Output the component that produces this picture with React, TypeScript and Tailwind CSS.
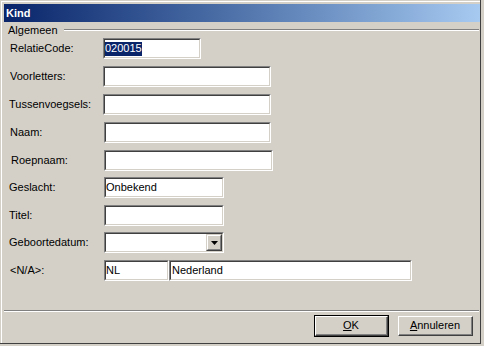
import React from "react";

const font = { fontFamily: '"Liberation Sans", Arial, sans-serif' };

function Edit({
  w,
  children,
  className = "",
}: {
  w: string;
  children?: React.ReactNode;
  className?: string;
}) {
  return (
    <div
      className={`${w} h-[21px] shrink-0 border border-t-[#808080] border-l-[#808080] border-r-white border-b-white ${className}`}
    >
      <div className="h-full w-full border border-t-[#404040] border-l-[#404040] border-r-[#d4d0c8] border-b-[#d4d0c8] bg-white flex items-center text-[11px] text-black leading-none overflow-hidden">
        {children}
      </div>
    </div>
  );
}

function Row({
  label,
  mt,
  labelClass = "pl-[6px]",
  children,
}: {
  label: string;
  mt: string;
  labelClass?: string;
  children: React.ReactNode;
}) {
  return (
    <div className={`flex items-center h-[21px] ${mt}`}>
      <div className={`w-[99px] shrink-0 text-[11px] text-black ${labelClass}`}>{label}</div>
      {children}
    </div>
  );
}

export default function App() {
  return (
    <div className="w-[484px] h-[346px] bg-[#d4d0c8] overflow-hidden" style={font}>
      <div className="w-[481px] h-[344px] border-r border-b border-[#404040] bg-[#d4d0c8] flex flex-col">
        <div className="mt-[1px] ml-[1px] flex-1 border-t border-l border-white pt-[2px] pl-[2px] flex flex-col">
          {/* Title bar */}
          <div className="h-[18px] w-[476px] bg-linear-to-r from-[#0a246a] to-[#a6caf0] flex items-center pl-[2px]">
            <span className="text-white font-bold text-[11px] leading-none">Kind</span>
          </div>

          {/* Main area */}
          <div className="flex-1 flex flex-col">
            {/* Group header */}
            <div className="h-[14px] mt-[1px] flex items-center">
              <span className="pl-[4px] text-[11px] text-black leading-none">Algemeen</span>
              <div className="flex-1 ml-[6px] mr-[1px] h-[2px] border-t border-b border-t-[#808080] border-b-white" />
            </div>

            <Row label="RelatieCode:" mt="mt-[1px]">
              <Edit w="w-[98px]">
                <span className="bg-[#0a246a] text-white h-[14px] flex items-center">020015</span>
              </Edit>
            </Row>
            <Row label="Voorletters:" mt="mt-[7px]">
              <Edit w="w-[168px]" />
            </Row>
            <Row label="Tussenvoegsels:" mt="mt-[7px]" labelClass="pl-[5px]">
              <Edit w="w-[168px]" />
            </Row>
            <Row label="Naam:" mt="mt-[7px]">
              <Edit w="w-[167px]" className="ml-[1px]" />
            </Row>
            <Row label="Roepnaam:" mt="mt-[7px]" labelClass="pl-[7px]">
              <Edit w="w-[169px]" className="ml-[1px]" />
            </Row>
            <Row label="Geslacht:" mt="mt-[6px]" labelClass="pl-[5px]">
              <Edit w="w-[120px]" className="ml-[1px]">
                <span>Onbekend</span>
              </Edit>
            </Row>
            <Row label="Titel:" mt="mt-[7px]" labelClass="pl-[5px]">
              <Edit w="w-[120px]" className="ml-[1px]" />
            </Row>
            <Row label="Geboortedatum:" mt="mt-[6px]" labelClass="pl-[5px]">
              <Edit w="w-[120px]" className="ml-[1px]">
                <div className="flex-1" />
                <div className="w-[16px] h-full shrink-0 border border-t-[#d4d0c8] border-l-[#d4d0c8] border-r-[#404040] border-b-[#404040]">
                  <div className="w-full h-full border border-t-white border-l-white border-r-[#808080] border-b-[#808080] bg-[#d4d0c8] flex items-center justify-center">
                    <svg width="7" height="4" viewBox="0 0 7 4">
                      <path d="M0 0H7L3.5 4Z" fill="#000" />
                    </svg>
                  </div>
                </div>
              </Edit>
            </Row>
            <Row label="<N/A>:" mt="mt-[7px]">
              <Edit w="w-[65px]" className="ml-[1px]">
                <span>NL</span>
              </Edit>
              <Edit w="w-[243px]">
                <span className="pl-[1px]">Nederland</span>
              </Edit>
            </Row>
          </div>

          {/* Separator */}
          <div className="h-[2px] mr-[1px] border-t border-b border-t-[#808080] border-b-white" />

          {/* Buttons */}
          <div className="h-[22px] mt-[3px] mb-[6px] flex items-center justify-end pr-[7px] gap-[9px]">
            <div className="w-[75px] h-[22px] border border-black">
              <div className="w-full h-full border border-t-white border-l-white border-r-[#404040] border-b-[#404040]">
                <div className="w-full h-full border-r border-b border-[#808080] flex items-center justify-center text-[11px] text-black">
                  <span>
                    <span className="underline">O</span>K
                  </span>
                </div>
              </div>
            </div>
            <div className="w-[75px] h-[20px] border border-t-white border-l-white border-r-[#404040] border-b-[#404040]">
              <div className="w-full h-full border-r border-b border-[#808080] flex items-center justify-center text-[11px] text-black">
                <span>
                  <span className="underline">A</span>nnuleren
                </span>
              </div>
            </div>
          </div>
        </div>
      </div>
    </div>
  );
}
